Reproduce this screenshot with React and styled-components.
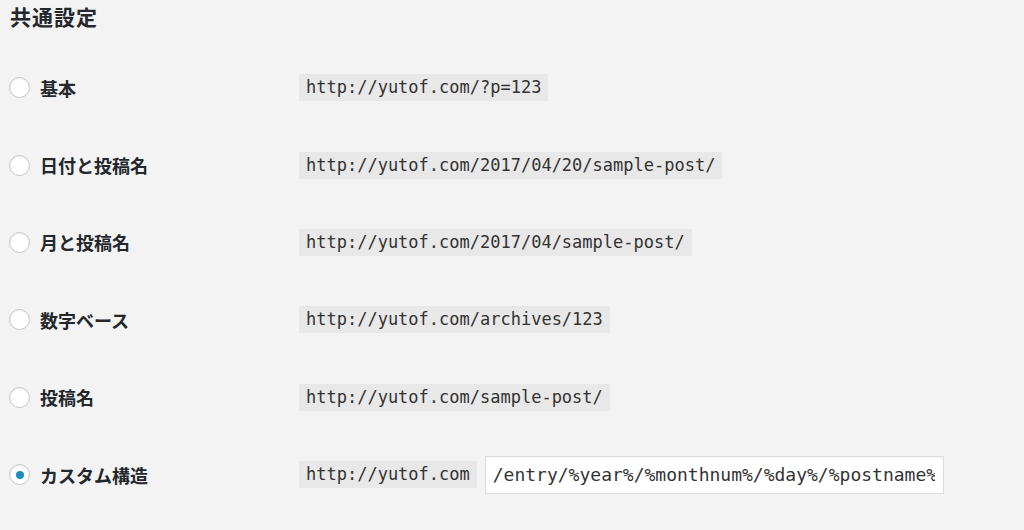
import React, { useState } from 'react'
import styled, { createGlobalStyle } from 'styled-components'

const GlobalStyle = createGlobalStyle`
  html, body {
    margin: 0;
    padding: 0;
    background: #f3f3f3;
  }
  body {
    font-family: "Noto Sans CJK JP", "Noto Sans", sans-serif;
    color: #23282d;
  }
`

const Page = styled.div`
  width: 1024px;
  height: 530px;
  padding: 0 9px;
  box-sizing: border-box;
  overflow: hidden;
`

const Title = styled.h2`
  margin: 0 0 0 1px;
  height: 32px;
  font-size: 21px;
  line-height: 32px;
  font-weight: 700;
  letter-spacing: 1px;
`

const List = styled.div`
  margin-top: 17px;
  display: flex;
  flex-direction: column;
`

const Row = styled.label`
  display: grid;
  grid-template-columns: 290px 1fr;
  align-items: center;
  height: 77.4px;
  cursor: pointer;
`

const LabelCell = styled.div`
  display: flex;
  align-items: center;
  gap: 10px;
`

const Radio = styled.span`
  width: 21px;
  height: 21px;
  border-radius: 50%;
  border: 1px solid #c3c6c9;
  background: #fff;
  box-shadow: inset 0 1px 2px rgba(0, 0, 0, 0.08);
  box-sizing: border-box;
  display: flex;
  align-items: center;
  justify-content: center;
  flex-shrink: 0;

  &::after {
    content: '';
    width: 8px;
    height: 8px;
    border-radius: 50%;
    background: ${p => (p.$checked ? '#1e8cbe' : 'transparent')};
  }
`

const LabelText = styled.span`
  font-size: 18px;
  font-weight: 700;
  line-height: 1;
`

const ValueCell = styled.div`
  display: flex;
  align-items: center;
  gap: 8px;
`

const Code = styled.code`
  display: inline-block;
  background: #e8e8e8;
  color: #333;
  font-family: "DejaVu Sans Mono", "Liberation Mono", monospace;
  font-size: 17px;
  line-height: 27px;
  height: 27px;
  padding: 0 7px;
  white-space: nowrap;
`

const StructureInput = styled.input`
  width: 459px;
  height: 38px;
  box-sizing: border-box;
  border: 1px solid #dcdcdc;
  background: #fff;
  box-shadow: inset 0 1px 2px rgba(0, 0, 0, 0.05);
  padding: 0 8px 0 7px;
  font-family: "DejaVu Sans Mono", "Liberation Mono", monospace;
  font-size: 18px;
  color: #333;
  outline: none;
`

const options = [
  { id: 'plain', label: '基本', url: 'http://yutof.com/?p=123' },
  { id: 'day', label: '日付と投稿名', url: 'http://yutof.com/2017/04/20/sample-post/' },
  { id: 'month', label: '月と投稿名', url: 'http://yutof.com/2017/04/sample-post/' },
  { id: 'numeric', label: '数字ベース', url: 'http://yutof.com/archives/123' },
  { id: 'post', label: '投稿名', url: 'http://yutof.com/sample-post/' },
]

export default function App() {
  const [selected, setSelected] = useState('custom')

  return (
    <Page>
      <GlobalStyle />
      <Title>共通設定</Title>
      <List>
        {options.map(o => (
          <Row key={o.id} onClick={() => setSelected(o.id)}>
            <LabelCell>
              <Radio $checked={selected === o.id} />
              <LabelText>{o.label}</LabelText>
            </LabelCell>
            <ValueCell>
              <Code>{o.url}</Code>
            </ValueCell>
          </Row>
        ))}
        <Row onClick={() => setSelected('custom')}>
          <LabelCell>
            <Radio $checked={selected === 'custom'} />
            <LabelText>カスタム構造</LabelText>
          </LabelCell>
          <ValueCell>
            <Code>http://yutof.com</Code>
            <StructureInput defaultValue="/entry/%year%/%monthnum%/%day%/%postname%/" />
          </ValueCell>
        </Row>
      </List>
    </Page>
  )
}
